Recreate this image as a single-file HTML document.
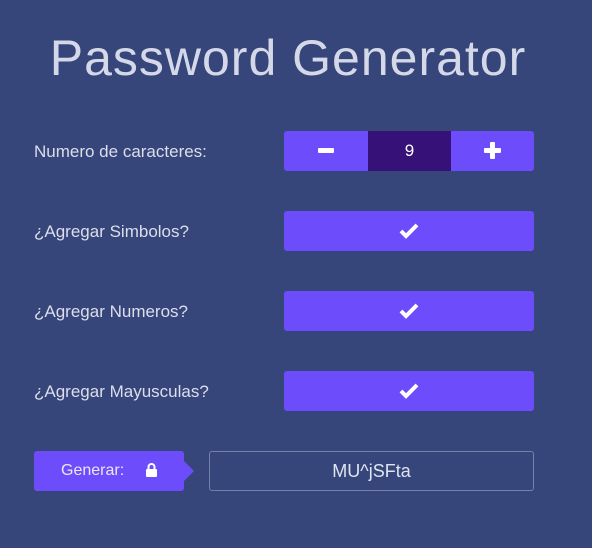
<!DOCTYPE html>
<html><head><style>
body{margin:0;width:592px;height:548px;background:#36467a;font-family:"Liberation Sans",sans-serif;color:#e6e6f0;position:relative;overflow:hidden}
.t{position:absolute;left:0;width:576px;text-align:center;top:29px;font-size:50px;font-weight:300;color:#d4d8e8;letter-spacing:1px}
.l{position:absolute;left:34px;font-size:17px;color:#dcdeea}
.b{position:absolute;left:284px;width:250px;height:40px;background:#6c4cfb;border-radius:3px;display:flex;align-items:center;justify-content:center}
.n{position:absolute;left:368px;width:83px;height:40px;top:131px;background:#361278;color:#fff;font-size:17px;text-align:center;line-height:40px}
</style></head><body>
<div class="t">Password Generator</div>
<div class="l" style="top:142px">Numero de caracteres:</div>
<div class="b" style="top:131px"></div>
<div style="position:absolute;left:318px;top:148px;width:16px;height:5px;background:#fff;border-radius:1px"></div>
<div class="n">9</div>
<div style="position:absolute;left:484px;top:148px;width:17px;height:5px;background:#fff;border-radius:1px"></div>
<div style="position:absolute;left:490px;top:142px;width:5px;height:17px;background:#fff;border-radius:1px"></div>
<div class="l" style="top:222px">¿Agregar Simbolos?</div>
<div class="l" style="top:302px">¿Agregar Numeros?</div>
<div class="l" style="top:382px">¿Agregar Mayusculas?</div>
<div class="b" style="top:211px"><svg width="20" height="16" viewBox="0 0 20 16"><path d="M2 8l5 5L18 2" stroke="#fff" stroke-width="4" fill="none"/></svg></div>
<div class="b" style="top:291px"><svg width="20" height="16" viewBox="0 0 20 16"><path d="M2 8l5 5L18 2" stroke="#fff" stroke-width="4" fill="none"/></svg></div>
<div class="b" style="top:371px"><svg width="20" height="16" viewBox="0 0 20 16"><path d="M2 8l5 5L18 2" stroke="#fff" stroke-width="4" fill="none"/></svg></div>
<div style="position:absolute;left:34px;top:451px;width:150px;height:40px;background:#6c4cfb;border-radius:3px"></div>
<div style="position:absolute;left:184px;top:461px;width:0;height:0;border-top:10px solid transparent;border-bottom:10px solid transparent;border-left:10px solid #6c4cfb"></div>
<div style="position:absolute;left:61px;top:462px;font-size:16px;color:#e8e8f0">Generar:</div>
<svg style="position:absolute;left:145px;top:462px" width="13" height="16" viewBox="0 0 13 16"><path d="M3.5 7V5a3 3 0 0 1 6 0v2" stroke="#fff" stroke-width="2" fill="none"/><rect x="1" y="7" width="11" height="8" rx="1" fill="#fff"/></svg>
<div style="position:absolute;left:209px;top:451px;width:323px;height:38px;border:1px solid #7582a8;border-radius:3px;text-align:center;line-height:38px;font-size:18px;color:#e0e4f0">MU^jSFta</div>
</body></html>
